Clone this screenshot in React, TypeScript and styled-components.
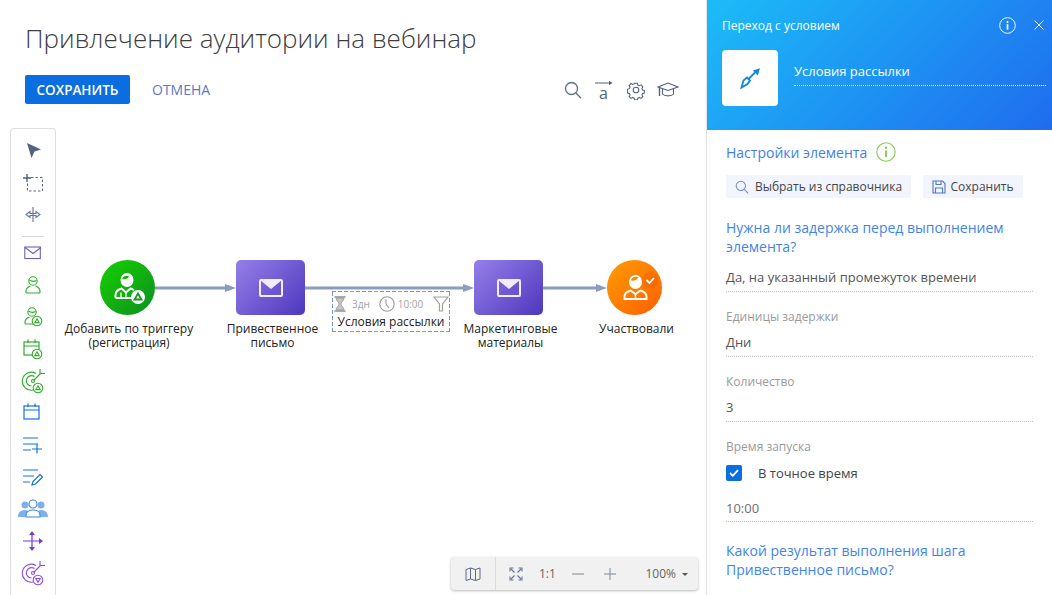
import { FunctionComponent, ReactNode } from 'react';
import styled, { createGlobalStyle } from 'styled-components';

const GlobalStyle = createGlobalStyle`
  html, body {
    margin: 0;
    padding: 0;
    background: #fff;
    overflow: hidden;
  }
  * {
    box-sizing: border-box;
  }
`;

const Page = styled.div`
  width: 1052px;
  height: 595px;
  display: flex;
  overflow: hidden;
  font-family: 'Open Sans', 'Noto Sans', sans-serif;
  color: #444;
`;

const Main = styled.div`
  width: 706px;
  display: flex;
  flex-direction: column;
`;

const Title = styled.h1`
  margin: 0;
  padding: 21px 0 0 25px;
  height: 75px;
  flex-shrink: 0;
  font-size: 26px;
  line-height: 35px;
  font-weight: 300;
  color: #3d3d3d;
  white-space: nowrap;
`;

const ActionBar = styled.div`
  display: flex;
  align-items: center;
  flex-shrink: 0;
  height: 29px;
  padding: 0 25px;
`;

const SaveButton = styled.button`
  width: 105px;
  height: 29px;
  border: 0;
  border-radius: 2px;
  background: #0a6de0;
  color: #fff;
  font: 600 13.5px 'Open Sans', sans-serif;
`;

const CancelButton = styled.button`
  margin-left: 22px;
  padding: 0;
  border: 0;
  background: none;
  color: #5f78c6;
  font: 400 14px 'Open Sans', sans-serif;
`;

const ToolIcons = styled.div`
  margin-left: auto;
  margin-right: 2px;
  display: flex;
  align-items: center;
  gap: 11px;
`;

const Workspace = styled.div`
  position: relative;
  flex: 1;
  min-height: 0;
  margin-top: 24px;
  padding-left: 10px;
`;

const Palette = styled.div`
  width: 46px;
  height: 467px;
  border: 1px solid #dedede;
  border-bottom: 0;
  border-radius: 4px 4px 0 0;
  display: flex;
  flex-direction: column;
  align-items: center;
  padding-top: 6px;
`;

const PaletteSlot = styled.div`
  height: 32px;
  flex-shrink: 0;
  display: flex;
  align-items: center;
  justify-content: center;
`;

const PaletteDivider = styled.div`
  width: 22px;
  height: 1px;
  flex-shrink: 0;
  margin-top: 5px;
  background: #d8d8d8;
`;

const Wires = styled.svg`
  position: absolute;
  left: 0;
  top: 0;
  width: 706px;
  height: 300px;
`;

const Node = styled.div<{ $x: number; $y: number; $w: number }>`
  position: absolute;
  left: ${(p) => p.$x}px;
  top: ${(p) => p.$y}px;
  width: ${(p) => p.$w}px;
  display: flex;
  flex-direction: column;
  align-items: center;
`;

const RoundShape = styled.div<{ $bg: string }>`
  width: 55px;
  height: 55px;
  border-radius: 50%;
  background: ${(p) => p.$bg};
  display: flex;
  align-items: center;
  justify-content: center;
`;

const SquareShape = styled.div`
  width: 69px;
  height: 55px;
  border-radius: 5px;
  background: linear-gradient(135deg, #9580ea 0%, #4d37bd 100%);
  display: flex;
  align-items: center;
  justify-content: center;
`;

const NodeLabel = styled.div`
  margin-top: 7px;
  margin-left: 4px;
  font-size: 12px;
  line-height: 14px;
  color: #222;
  text-align: center;
  white-space: nowrap;
`;

const ConditionBox = styled.div`
  position: absolute;
  left: 332px;
  top: 163px;
  width: 118px;
  height: 41px;
  display: flex;
  flex-direction: column;
  align-items: center;
  padding-top: 4px;
  background-color: #fff;
  background-image:
    repeating-linear-gradient(90deg, #7396da 0 4px, transparent 4px 6px),
    repeating-linear-gradient(90deg, #7396da 0 4px, transparent 4px 6px),
    repeating-linear-gradient(0deg, #7396da 0 4px, transparent 4px 6px),
    repeating-linear-gradient(0deg, #7396da 0 4px, transparent 4px 6px);
  background-size: 100% 1px, 100% 1px, 1px 100%, 1px 100%;
  background-position: top, bottom, left, right;
  background-repeat: no-repeat;
`;

const ConditionMeta = styled.div`
  display: flex;
  align-items: center;
  height: 18px;
  width: 100%;
  padding: 0 1px;
  font-size: 10px;
  color: #a3a3a3;
`;

const MetaText = styled.span<{ $gap: number }>`
  margin-left: ${(p) => p.$gap}px;
  display: flex;
  white-space: nowrap;
`;

const MetaEnd = styled.span`
  margin-left: auto;
  display: flex;
`;

const ConditionLabel = styled.div`
  font-size: 12px;
  line-height: 14px;
  margin-top: 2px;
  color: #222;
  white-space: nowrap;
`;

const ZoomBar = styled.div`
  position: absolute;
  left: 451px;
  top: 429px;
  width: 247px;
  height: 33px;
  background: #f1f1f1;
  border-radius: 4px;
  box-shadow: 0 1px 3px rgba(0, 0, 0, 0.28);
  display: flex;
  align-items: center;
  font-size: 12px;
  color: #666;
`;

const MapCell = styled.div`
  width: 45px;
  height: 100%;
  border-right: 1px solid #dcdcdc;
  display: flex;
  align-items: center;
  justify-content: center;
`;

const ZoomControls = styled.div`
  flex: 1;
  display: flex;
  align-items: center;
  gap: 16px;
  padding: 0 10px 0 13px;
`;

const PlusSlot = styled.span`
  display: flex;
  margin-left: 4px;
`;

const ZoomValue = styled.span`
  margin-left: auto;
  display: flex;
  align-items: center;
  gap: 6px;
`;

const Caret = styled.span`
  width: 0;
  height: 0;
  border-left: 3px solid transparent;
  border-right: 3px solid transparent;
  border-top: 3px solid #555;
  margin-top: 2px;
`;

const Panel = styled.aside`
  width: 346px;
  border-left: 1px solid #e3e3e3;
  display: flex;
  flex-direction: column;
`;

const PanelHeader = styled.header`
  height: 130px;
  background: linear-gradient(135deg, #1cbcf8 0%, #1f6cee 100%);
  padding: 0 6px 0 15px;
  color: #fff;
`;

const HeaderTop = styled.div`
  height: 50px;
  display: flex;
  align-items: center;
  font-size: 12px;
`;

const HeaderButtons = styled.div`
  margin-left: auto;
  margin-right: 2px;
  display: flex;
  align-items: center;
  gap: 18px;
`;

const HeaderBody = styled.div`
  display: flex;
`;

const IconTile = styled.div`
  width: 56px;
  height: 56px;
  border-radius: 4px;
  background: #fff;
  display: flex;
  align-items: center;
  justify-content: center;
`;

const NameField = styled.div`
  flex: 1;
  margin-left: 16px;
  height: 36px;
  padding-top: 12px;
  border-bottom: 1px dotted #fff;
  font-size: 13px;
  line-height: 18px;
`;

const PanelBody = styled.div`
  padding: 11px 19px 0 19px;
`;

const SectionHead = styled.div`
  display: flex;
  align-items: center;
  gap: 9px;
  height: 22px;
  font-size: 14px;
  color: #3f80e6;
`;

const ChipRow = styled.div`
  display: flex;
  gap: 12px;
  margin-top: 12px;
`;

const Chip = styled.button<{ $w: number; $gap: number }>`
  width: ${(p) => p.$w}px;
  height: 23px;
  border: 0;
  background: #f2f5fd;
  display: flex;
  align-items: center;
  justify-content: center;
  gap: ${(p) => p.$gap}px;
  padding: 0;
  font: 400 12px 'Open Sans', sans-serif;
  color: #444;
`;

const Question = styled.div<{ $top: number }>`
  margin-top: ${(p) => p.$top}px;
  font-size: 14px;
  line-height: 19px;
  color: #3f84e8;
`;

const FieldLabel = styled.div`
  margin-top: 16px;
  height: 18px;
  font-size: 12px;
  line-height: 18px;
  color: #9a9a9a;
`;

const FieldValue = styled.div<{ $top?: number; $h?: number; $soft?: boolean }>`
  margin-top: ${(p) => p.$top ?? 6}px;
  height: ${(p) => p.$h ?? 25}px;
  padding-top: 1px;
  border-bottom: 1px dotted #bbb;
  font-size: 13px;
  line-height: 19px;
  color: ${(p) => (p.$soft ? '#6f6f6f' : '#555')};
`;

const CheckRow = styled.div`
  display: flex;
  align-items: center;
  gap: 16px;
  margin-top: 8px;
  height: 18px;
  font-size: 13px;
  color: #444;
`;

const CheckBox = styled.span`
  width: 16px;
  height: 16px;
  border-radius: 2px;
  background: #0a6de0;
  display: flex;
  align-items: center;
  justify-content: center;
`;

const Svg: FunctionComponent<{ w?: number; h?: number; vb?: string; children: ReactNode }> = ({
  w = 20,
  h = 20,
  vb,
  children,
}) => (
  <svg width={w} height={h} viewBox={vb ?? `0 0 ${w} ${h}`} fill="none">
    {children}
  </svg>
);

const Person = ({ c }: { c: string }) => (
  <g stroke={c} strokeWidth="1.1">
    <circle cx="9" cy="6" r="4.200" />
    <path d="M5.500 5c2 1.500 5 1.500 7 .5" />
    <path d="M2 18v-2c0-3 2-4 4.500-5M16 18v-2c0-3-2-4-4.500-5M2 18h14" />
  </g>
);

const Badge = ({ c, x = 14, y = 15, down }: { c: string; x?: number; y?: number; down?: boolean }) => (
  <g stroke={c} strokeWidth="1.1" fill="#fff">
    <circle cx={x} cy={y} r="4.800" />
    <path d={down ? `M${x - 2.2} ${y - 1.5}h4.400l-2.200 3.800z` : `M${x} ${y - 2.2}l2.200 3.800h-4.400z`} />
  </g>
);

const Target = ({ c }: { c: string }) => (
  <g stroke={c} strokeWidth="1.1">
    <path d="M15 5.500A9 9 0 1 0 12 22" />
    <path d="M13.500 8.500A5.200 5.200 0 1 0 10.500 18" />
    <circle cx="12" cy="13" r="1.500" />
    <path d="M12.500 12.500L20 5M19 1v4.500h5" />
  </g>
);

const SelectIcon = () => (
  <Svg>
    <path d="M4 2l14 6.500-6.500 2L8.500 17z" fill="#55627f" />
  </Svg>
);

const MarqueeIcon = () => (
  <Svg w={22} h={20}>
    <path d="M9 4.500h11.500v13.500H5.500V10" stroke="#5c6b95" strokeWidth="1.100" strokeDasharray="2.500 2" />
    <path d="M5 1v8M1 5h8" stroke="#4a5a7e" strokeWidth="1.300" />
  </Svg>
);

const ResizeIcon = () => (
  <Svg>
    <path d="M10 2v15" stroke="#6a6a8a" strokeWidth="1.100" />
    <path d="M7 6.500L3 9.500l4 3v-2h6v2l4-3-4-3v2H7z" stroke="#5a78b0" strokeWidth="1.100" />
  </Svg>
);

const MailOutlineIcon = () => (
  <Svg w={18} h={14}>
    <rect x=".8" y="1" width="15.500" height="11.500" stroke="#6a5fb5" strokeWidth="1.100" />
    <path d="M1 1.500l8 6 8-6" stroke="#6a5fb5" strokeWidth="1.100" />
  </Svg>
);

const CalendarIcon = ({ c, badge }: { c: string; badge?: boolean }) => (
  <Svg w={22} h={22}>
    <rect x="2" y="4" width="15" height="13" stroke={c} strokeWidth="1.200" />
    <path d="M2 8h15M6 1.500V5M13 1.500V5" stroke={c} strokeWidth="1.200" />
    {badge && <Badge c={c} x={15} y={16} />}
  </Svg>
);

const ListPlusIcon = () => (
  <Svg w={22} h={18}>
    <path d="M1 2h15M1 8h15M1 14h8M15 7.500v10M10 13h10" stroke="#1471de" strokeWidth="1.200" />
  </Svg>
);

const ListPenIcon = () => (
  <Svg w={22} h={18}>
    <path d="M1 2h15M1 8h11M1 14h7" stroke="#1471de" strokeWidth="1.200" />
    <path d="M10 17l1-3.500 7-7 2.500 2.500-7 7z" stroke="#1471de" strokeWidth="1.200" />
  </Svg>
);

const GroupIcon = () => (
  <Svg w={30} h={22}>
    <circle cx="7" cy="7" r="3.500" fill="#7fb0ee" />
    <circle cx="23" cy="7" r="3.500" fill="#7fb0ee" />
    <path d="M0 19c0-5 3-7 7-7s4 3 4 7zM30 19c0-5-3-7-7-7s-4 3-4 7z" fill="#7fb0ee" />
    <circle cx="15" cy="6" r="4" fill="#fff" stroke="#3f85e0" strokeWidth="1.100" />
    <path d="M8 19v-2c0-3 3-5 7-5s7 2 7 5v2z" fill="#fff" stroke="#3f85e0" strokeWidth="1.100" />
  </Svg>
);

const BranchIcon = () => (
  <Svg w={22} h={22}>
    <path d="M1 11h17M10 3v16" stroke="#7a35e0" strokeWidth="1.200" />
    <path d="M10 1l3 4H7zM10 21l3-4H7zM21 11l-4-3v6z" fill="#7a35e0" />
  </Svg>
);

const SearchIcon = ({ size = 18, c = '#5d6f8e' }: { size?: number; c?: string }) => (
  <Svg w={size} h={size} vb="0 0 18 18">
    <circle cx="7.500" cy="7.500" r="6" stroke={c} strokeWidth="1.300" />
    <path d="M12 12l5 5.200" stroke={c} strokeWidth="1.300" />
  </Svg>
);

const TranslateIcon = () => (
  <Svg w={22} h={22}>
    <path d="M2 4h16" stroke="#53607a" strokeWidth="1" />
    <path d="M16 1.800L19.500 4 16 6.200z" fill="#53607a" />
    <text x="6" y="20" fontSize="16" fontFamily="Open Sans, sans-serif" fill="#53607a">
      a
    </text>
  </Svg>
);

const GearIcon = () => (
  <Svg w={20} h={20}>
    <circle cx="10" cy="10" r="2.800" stroke="#54657f" strokeWidth="1.100" />
    <path
      d="M8.500 2.500h3l.5 2 1.800.8 1.800-1 2 2.200-1 1.700.7 1.800 2 .5v2.800l-2 .5-.7 1.800 1 1.700-2 2-1.800-1-1.800.8-.5 1.800h-3l-.5-1.800-1.800-.8-1.800 1-2-2 1-1.700-.7-1.800-2-.5V9l2-.5.700-1.800-1-1.700 2-2.200 1.800 1 1.800-.8z"
      transform="translate(1 1) scale(.9)"
      stroke="#54657f"
      strokeWidth="1.200"
    />
  </Svg>
);

const CapIcon = () => (
  <Svg w={22} h={20}>
    <path d="M1 7l10-4 10 4-10 3.500z" stroke="#53607a" strokeWidth="1.100" />
    <path d="M5.500 9v5c2 2.500 9 2.500 11 0V9" stroke="#53607a" strokeWidth="1.100" />
    <path d="M2.500 8v8" stroke="#53607a" strokeWidth="1.400" />
  </Svg>
);

const MailIcon = () => (
  <Svg w={24} h={18}>
    <rect x="1" y="1" width="22" height="16" rx="1" stroke="#f1edfc" strokeWidth="2" />
    <path d="M1 1h22L12 10z" fill="#f1edfc" />
  </Svg>
);

const TriggerIcon = () => (
  <Svg w={38} h={34}>
    <ellipse cx="19" cy="9" rx="6.500" ry="7" fill="#fff" />
    <path d="M14.500 8c2.500.5 5 0 6.500-2.500-2-1.500-6-1-6.500 2.500z" fill="#14b40c" />
    <path
      d="M7.500 27v-3c0-3.500 2.500-5.500 6-6.500l4.500 4 4.500-4c1.500.4 2.500 1 3.500 1.700M7.500 27H25"
      stroke="#fff"
      strokeWidth="2"
    />
    <path d="M13 21.500V27M18 22v5" stroke="#fff" strokeWidth="1.300" />
    <circle cx="30" cy="26" r="7" fill="#fff" />
    <path d="M30 22.500l3.500 6h-7z" stroke="#109a1a" strokeWidth="1.800" />
  </Svg>
);

const ParticipantIcon = () => (
  <Svg w={46} h={34}>
    <circle cx="38.500" cy="9" r="8" fill="#d85a00" fillOpacity=".28" />
    <path d="M34.500 9l3 3 4.500-5" stroke="#fff" strokeWidth="1.800" />
    <ellipse cx="23.500" cy="11" rx="6.500" ry="7" fill="#fff" />
    <path d="M19 9.500c3 .5 6-.5 7.500-3-2-1.500-7-1-7.500 3z" fill="#ff8400" />
    <path d="M12.500 28v-2.500c0-3.500 2.500-5 6-6l5 3.500 5-3.500c3.500 1 6 2.500 6 6V28z" stroke="#fff" strokeWidth="2" />
    <path d="M23.500 23v5" stroke="#fff" strokeWidth="1.500" />
  </Svg>
);

const HourglassIcon = () => (
  <Svg w={14} h={16}>
    <path d="M1.500 1h11M1.500 15h11" stroke="#8f8f8f" strokeWidth="1.500" />
    <path d="M3 2h8c0 3-3 4-3 6s3 3 3 6H3c0-3 3-4 3-6S3 5 3 2z" fill="#c4c4c4" stroke="#9a9a9a" strokeWidth=".8" />
  </Svg>
);

const ClockIcon = () => (
  <Svg w={16} h={16}>
    <circle cx="8" cy="8" r="7.200" stroke="#9b9b9b" strokeWidth="1.100" />
    <path d="M7 3.500V8l3 4" stroke="#9b9b9b" strokeWidth="1.100" />
  </Svg>
);

const FilterIcon = () => (
  <Svg w={16} h={16}>
    <path d="M1 1h14L9.500 8v7h-3V8z" stroke="#a5a095" strokeWidth="1.200" />
  </Svg>
);

const InfoIcon = ({ c, size }: { c: string; size: number }) => (
  <Svg w={size} h={size} vb="0 0 20 20">
    <circle cx="10" cy="10" r="9.200" stroke={c} strokeWidth="1.100" />
    <path d="M10 8.500v6.500" stroke={c} strokeWidth="2" />
    <circle cx="10" cy="5.800" r="1.200" fill={c} />
  </Svg>
);

const CloseIcon = () => (
  <Svg w={10} h={10}>
    <path d="M.5.500l9 9M9.500.500l-9 9" stroke="#fff" strokeWidth="1" />
  </Svg>
);

const ConnectorIcon = () => (
  <Svg w={24} h={24}>
    <path d="M3.500 21.500L5.500 14.500 9 11.500 12 14.500 9.500 18z" stroke="#1186e0" strokeWidth="1.800" />
    <path d="M10.500 13L17 6.500" stroke="#1186e0" strokeWidth="1.800" />
    <path d="M22 2.300L19.800 9.500 14.800 4.500z" fill="#1186e0" />
  </Svg>
);

const SaveGlyph = () => (
  <Svg w={14} h={14}>
    <path d="M1 1h9.500L13 3.500V13H1z" stroke="#4f76c8" strokeWidth="1.100" />
    <path d="M4 1v3.500h5V1M3.500 13V8h7v5" stroke="#4f76c8" strokeWidth="1.100" />
  </Svg>
);

const MapIcon = () => (
  <Svg w={16} h={14}>
    <path d="M1 2.500L5.500 1l5 1.500L15 1v11l-4.500 1.500-5-1.500L1 13.500z" stroke="#5f6a85" strokeWidth="1" />
    <path d="M5.500 1v11M10.500 2.500v11" stroke="#5f6a85" strokeWidth="1" />
  </Svg>
);

const FitIcon = () => (
  <Svg w={14} h={14}>
    <path
      d="M1 4.500V1h3.500M9.500 1H13v3.500M13 9.500V13H9.500M4.500 13H1V9.500M2 2l3.500 3.500M12 2L8.500 5.500M12 12L8.500 8.500M2 12l3.500-3.500"
      stroke="#66748f"
      strokeWidth="1.100"
    />
  </Svg>
);

const LineGlyph = ({ plus }: { plus?: boolean }) => (
  <Svg w={12} h={12}>
    <path d={plus ? 'M0 6h12M6 0v12' : 'M0 6h12'} stroke="#7f8794" strokeWidth="1" />
  </Svg>
);

const CheckGlyph = () => (
  <Svg w={10} h={8}>
    <path d="M1 4l2.800 2.800L9 1.200" stroke="#fff" strokeWidth="1.800" />
  </Svg>
);

const paletteIcons: ReactNode[] = [
  <MailOutlineIcon key="mail" />,
  <Svg key="person" w={18} h={20}><Person c="#2fae2a" /></Svg>,
  <Svg key="person-badge" w={20} h={22}><Person c="#2fae2a" /><Badge c="#2fae2a" /></Svg>,
  <CalendarIcon key="cal-badge" c="#2fae2a" badge />,
  <Svg key="target-green" w={24} h={26}><Target c="#2fae2a" /><Badge c="#2fae2a" x={17} y={20} /></Svg>,
  <CalendarIcon key="cal" c="#1471de" />,
  <ListPlusIcon key="list-plus" />,
  <ListPenIcon key="list-pen" />,
  <GroupIcon key="group" />,
  <BranchIcon key="branch" />,
  <Svg key="target-purple" w={24} h={26}><Target c="#8d4fe6" /><Badge c="#8d4fe6" x={17} y={20} down /></Svg>,
];

const Arrow = ({ x1, x2 }: { x1: number; x2: number }) => (
  <g>
    <path d={`M${x1} 160H${x2 - 8}`} stroke="#8b9dba" strokeWidth="3" />
    <path d={`M${x2 - 11} 156l11 4-11 4z`} fill="#8b9dba" />
  </g>
);

const App: FunctionComponent = () => (
  <Page>
    <GlobalStyle />
    <Main>
      <Title>Привлечение аудитории на вебинар</Title>
      <ActionBar>
        <SaveButton>СОХРАНИТЬ</SaveButton>
        <CancelButton>ОТМЕНА</CancelButton>
        <ToolIcons>
          <SearchIcon />
          <TranslateIcon />
          <GearIcon />
          <CapIcon />
        </ToolIcons>
      </ActionBar>
      <Workspace>
        <Palette>
          <PaletteSlot><SelectIcon /></PaletteSlot>
          <PaletteSlot><MarqueeIcon /></PaletteSlot>
          <PaletteSlot><ResizeIcon /></PaletteSlot>
          <PaletteDivider />
          {paletteIcons.map((icon, i) => (
            <PaletteSlot key={i}>{icon}</PaletteSlot>
          ))}
        </Palette>
        <Wires>
          <Arrow x1={155} x2={236} />
          <Arrow x1={305} x2={474} />
          <Arrow x1={543} x2={607} />
        </Wires>
        <Node $x={47} $y={132} $w={160}>
          <RoundShape $bg="linear-gradient(135deg, #18d000 0%, #0b8f22 100%)"><TriggerIcon /></RoundShape>
          <NodeLabel>Добавить по триггеру<br />(регистрация)</NodeLabel>
        </Node>
        <Node $x={200} $y={132} $w={141}>
          <SquareShape><MailIcon /></SquareShape>
          <NodeLabel>Привественное<br />письмо</NodeLabel>
        </Node>
        <Node $x={438} $y={132} $w={141}>
          <SquareShape><MailIcon /></SquareShape>
          <NodeLabel>Маркетинговые<br />материалы</NodeLabel>
        </Node>
        <Node $x={564} $y={132} $w={141}>
          <RoundShape $bg="linear-gradient(135deg, #ff9d00 0%, #ff5f00 100%)"><ParticipantIcon /></RoundShape>
          <NodeLabel>Участвовали</NodeLabel>
        </Node>
        <ConditionBox>
          <ConditionMeta>
            <HourglassIcon />
            <MetaText $gap={5}>3дн</MetaText>
            <MetaText $gap={9}><ClockIcon /></MetaText>
            <MetaText $gap={3}>10:00</MetaText>
            <MetaEnd><FilterIcon /></MetaEnd>
          </ConditionMeta>
          <ConditionLabel>Условия рассылки</ConditionLabel>
        </ConditionBox>
        <ZoomBar>
          <MapCell><MapIcon /></MapCell>
          <ZoomControls>
            <FitIcon />
            <span>1:1</span>
            <LineGlyph />
            <PlusSlot><LineGlyph plus /></PlusSlot>
            <ZoomValue>100%<Caret /></ZoomValue>
          </ZoomControls>
        </ZoomBar>
      </Workspace>
    </Main>
    <Panel>
      <PanelHeader>
        <HeaderTop>
          Переход с условием
          <HeaderButtons>
            <InfoIcon c="#fff" size={17} />
            <CloseIcon />
          </HeaderButtons>
        </HeaderTop>
        <HeaderBody>
          <IconTile><ConnectorIcon /></IconTile>
          <NameField>Условия рассылки</NameField>
        </HeaderBody>
      </PanelHeader>
      <PanelBody>
        <SectionHead>
          Настройки элемента
          <InfoIcon c="#8ccb5e" size={20} />
        </SectionHead>
        <ChipRow>
          <Chip $w={185} $gap={6}><SearchIcon size={14} c="#6f8fd0" />Выбрать из справочника</Chip>
          <Chip $w={100} $gap={4}><SaveGlyph />Сохранить</Chip>
        </ChipRow>
        <Question $top={20}>Нужна ли задержка перед выполнением элемента?</Question>
        <FieldValue $top={11}>Да, на указанный промежуток времени</FieldValue>
        <FieldLabel>Единицы задержки</FieldLabel>
        <FieldValue>Дни</FieldValue>
        <FieldLabel>Количество</FieldLabel>
        <FieldValue>3</FieldValue>
        <FieldLabel>Время запуска</FieldLabel>
        <CheckRow><CheckBox><CheckGlyph /></CheckBox>В точное время</CheckRow>
        <FieldValue $top={16} $h={24} $soft>10:00</FieldValue>
        <Question $top={19}>Какой результат выполнения шага<br />Привественное письмо?</Question>
      </PanelBody>
    </Panel>
  </Page>
);

export default App;
